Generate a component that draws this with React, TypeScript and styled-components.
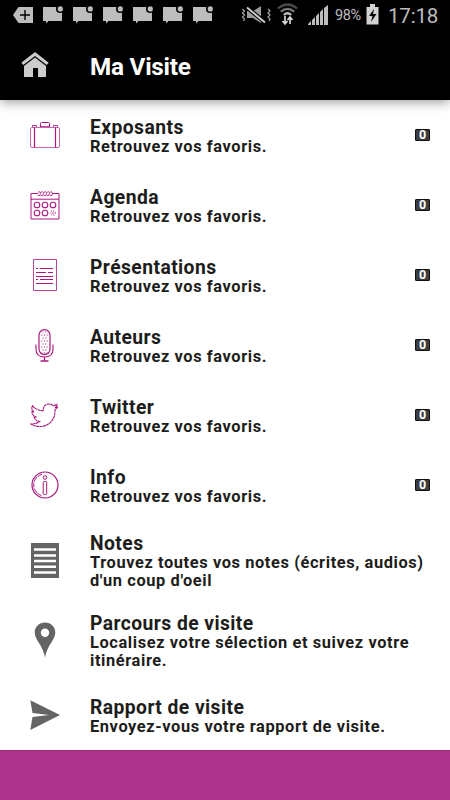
import React from 'react';
import styled, { createGlobalStyle } from 'styled-components';

const Global = createGlobalStyle`
  *, *::before, *::after { box-sizing: border-box; }
  html, body { margin: 0; padding: 0; background: #fff; }
  body { font-family: Roboto, "Open Sans", sans-serif; }
`;

const Screen = styled.div`
  width: 450px;
  height: 800px;
  display: flex;
  flex-direction: column;
  overflow: hidden;
  background: #fff;
`;

const Head = styled.header`
  flex: none;
  height: 100px;
  background: #000;
  box-shadow: 0 2px 11px rgba(0, 0, 0, 0.4);
`;

const StatusBar = styled.div`
  height: 32px;
  display: flex;
  justify-content: space-between;
  padding: 0 13px;
  color: #bdbdbd;
`;

const Notifications = styled.div`
  display: flex;
  gap: 10px;
  padding-top: 6px;
`;

const System = styled.div`
  display: flex;
  align-items: flex-start;
`;

const Battery = styled.span`
  display: block;
  width: 31px;
  font-size: 14.5px;
  line-height: 32px;
  letter-spacing: -0.4px;
`;

const Clock = styled.span`
  width: 49px;
  margin-left: 9px;
  font-size: 20.5px;
  line-height: 32px;
  letter-spacing: -0.2px;
  white-space: nowrap;
`;

const TitleBar = styled.div`
  height: 68px;
  display: grid;
  grid-template-columns: 90px 1fr;
  align-items: center;
`;

const HomeSlot = styled.div`
  padding: 0 0 3px 21px;
  display: flex;
`;

const PageTitle = styled.h1`
  margin: 0;
  padding-top: 1px;
  color: #fff;
  font-size: 24.3px;
  font-weight: 700;
  line-height: 30px;
  letter-spacing: -0.25px;
`;

const List = styled.ul`
  list-style: none;
  margin: 0;
  padding: 0;
  height: 650px;
`;

const Row = styled.li<{ $height: number }>`
  height: ${p => p.$height}px;
  display: grid;
  grid-template-columns: 90px 1fr auto;
  align-items: center;
`;

const IconSlot = styled.div`
  display: flex;
  justify-content: center;
  svg { display: block; }
`;

const Copy = styled.div<{ $drop: number }>`
  padding-top: ${p => p.$drop}px;
  color: #1d1d1b;
  white-space: nowrap;
`;

const RowTitle = styled.h2`
  margin: 0;
  font-size: 19.3px;
  line-height: 20px;
  font-weight: 700;
  letter-spacing: 0.43px;
`;

const Line = styled.div`
  font-size: 16.4px;
  line-height: 17.5px;
  font-weight: 700;
  letter-spacing: 0.6px;
`;

const Badge = styled.span`
  width: 15px;
  height: 12px;
  margin-right: 20px;
  border: 1px solid #111;
  border-radius: 1px;
  background: #3d3d3d;
  color: #fff;
  font-size: 12.5px;
  font-weight: 700;
  line-height: 10px;
  text-align: center;
`;

const Footer = styled.footer`
  height: 50px;
  border-top: 1px solid #9c2377;
  background: #ae338a;
`;

const pink = '#a8187f';
const grey = '#646464';

const TagIcon = () => (
  <svg width="20" height="18" viewBox="0 0 20 18">
    <path d="M5.500 1H20v16H5.500L0 9z" fill="#bdbdbd" />
    <path d="M7 9h10M12 4v10" stroke="#000" strokeWidth="1.400" />
  </svg>
);

const MessageIcon = () => (
  <svg width="20" height="18" viewBox="0 0 20 18">
    <path d="M0 1h19v14H5.500L3 17.500V15H0z" fill="#bdbdbd" />
    <circle cx="17" cy="3" r="4" fill="#000" />
    <circle cx="17.300" cy="2.900" r="2.600" fill="#bdbdbd" />
  </svg>
);

const MuteIcon = () => (
  <svg width="30" height="18" viewBox="0 0 30 18">
    <path d="M6 5h6l8-5v17l-8-5H6z" fill="#9b9b9b" />
    <path d="M5 1l20 16" stroke="#000" strokeWidth="4" />
    <path d="M6 1.500l18 15" stroke="#cacaca" strokeWidth="2" />
    <path d="M1.500 3l2 2-2 2 2 2-2 2 2 2-1 2M27 3l2 2-2 2 2 2-2 2 2 2-1 2" fill="none" stroke="#aaa" strokeWidth="1.200" />
  </svg>
);

const WifiIcon = () => (
  <svg width="21" height="23" viewBox="0 0 21 23">
    <g fill="none" strokeWidth="2.200">
      <path d="M.8 5.500Q10.500-2.500 20.200 5.500" stroke="#484848" />
      <path d="M3.800 8.700Q10.500 3 17.200 8.700" stroke="#777" />
      <path d="M6.800 12Q10.500 8.500 14.200 12" stroke="#bdbdbd" />
    </g>
    <path d="M8 13v7M5.500 18L8 21l2.500-3M13 21v-6M10.500 17l2.500-3 2.500 3" fill="none" stroke="#d5d5d5" strokeWidth="1.700" />
  </svg>
);

const SignalIcon = () => (
  <svg width="21" height="21" viewBox="0 0 21 21">
    <path d="M0 20v-1l3-3v4zM4 20v-5l3-3v8zM8 20v-9l3-3v12zM12 20V7l3-3v16zM16 20V3l4-3v20z" fill="#bdbdbd" />
  </svg>
);

const ChargeIcon = () => (
  <svg width="13" height="21" viewBox="0 0 13 21">
    <path d="M4 0h5v3h3.500v17.500H.5V3H4z" fill="#d2d2d2" />
    <path d="M8 5L3 12h3.500L5 18l5.500-8H7z" fill="#000" />
  </svg>
);

const StatusIcon = styled.span<{ $left: number; $top: number }>`
  display: block;
  margin-left: ${p => p.$left}px;
  padding-top: ${p => p.$top}px;
  svg { display: block; }
`;

const HomeIcon = () => (
  <svg width="28" height="26" viewBox="0 0 28 26" fill="#ccc">
    <path d="M14 0l13.700 10.700-2 2.300L14 4 2.300 13 .3 10.700z" />
    <path d="M14 5.500l11 8.500v11h-8v-9h-5v9H3V14z" />
  </svg>
);

const CaseIcon = () => (
  <svg width="30" height="26" viewBox="0 0 30 26" fill="none" stroke={pink}>
    <rect x=".5" y="5.500" width="29" height="20" rx="1.500" strokeOpacity=".65" />
    <path d="M4.500 5.500v20M25.500 5.500v20" strokeWidth="1.200" />
    <path d="M10.500 5V1.500q0-1 1-1h7q1 0 1 1V5" />
    <path d="M2.500 5V3.500h4V5M23.500 5V3.500h4V5M10.500 4.500h9" strokeOpacity=".8" />
  </svg>
);

const CalendarIcon = () => (
  <svg width="30" height="29" viewBox="0 0 30 29" fill="none" stroke={pink}>
    <path d="M8 2.500H1v25.500h28V2.500h-7M1 8.200h28" />
    {[9, 12, 15, 18, 21].map(x => (
      <path key={x} d={`M${x - 1} 1.300q2.500-1.500 2.500 1.200t-2.800 2.200`} strokeWidth=".9" />
    ))}
    {[7, 15, 23].map(x => (
      <circle key={x} cx={x} cy="14" r="2.800" strokeWidth="1.100" />
    ))}
    <circle cx="7" cy="22" r="2.800" strokeWidth="1.100" />
    <circle cx="15" cy="22" r="2.800" strokeWidth="1.100" />
    <circle cx="23" cy="22" r="2.300" strokeWidth="1.300" strokeDasharray="1 1" strokeOpacity=".6" />
    <circle cx="23" cy="22" r=".6" strokeOpacity=".5" />
  </svg>
);

const DocumentIcon = () => (
  <svg width="24" height="32" viewBox="0 0 24 32" fill="none" stroke={pink}>
    <path d="M.5.500h23v31H.5z" strokeOpacity=".8" />
    <path d="M3 9.500h2M6.500 9.500H20M3 13.500h10M15 13.500h5M3 17.500h17M3 20.500h2M7 20.500h13M3 24.500h17" strokeWidth="1.100" />
  </svg>
);

const holes = [3, 6, 9, 12, 15, 18, 21, 24];

const MicIcon = () => (
  <svg width="20" height="33" viewBox="0 0 20 33" fill="none" stroke={pink}>
    <rect x="4" y=".6" width="11" height="25" rx="5.500" strokeWidth="1.200" />
    {holes.map((y, i) => (
      <path key={y} d={i % 2 ? `M6.300 ${y}h1M9 ${y}h1M11.700 ${y}h1` : `M7.600 ${y}h1M10.400 ${y}h1`} strokeWidth="1" />
    ))}
    <path d="M1 15.500v4.500q0 8 8.500 8t8.500-8v-4.500" strokeWidth="1.100" />
    <path d="M9.500 28v4M5.500 32h8" strokeWidth="1.300" />
  </svg>
);

const BirdIcon = () => (
  <svg width="30" height="25" viewBox="0 0 30 25" fill="none" stroke={pink}>
    <path
      d="M2.500 2.800C5 6 8.500 7.500 13.200 7.700 13 3.200 15.500 1 19 1c2 0 3 .5 4.300 1.800L27 1.500l-1.500 3 2.500-.8-3 3.400C25.500 18 17.500 23.500 10 23.500c-3.500 0-6.500-.8-9-2.500 3.600 0 6.500-.8 8.700-2.500-2.800-.5-4.700-1.500-5.500-4.200h2.400C3.500 13.300 2 11.500 2 8.500l2 .6C1.700 7 1.300 5.200 2.500 2.800z"
      strokeWidth="1.100"
      strokeDasharray="3 .35"
    />
  </svg>
);

const InfoIcon = () => (
  <svg width="28" height="28" viewBox="0 0 28 28" fill="none" stroke={pink}>
    <circle cx="14" cy="14" r="13" strokeWidth="1.200" />
    <path d="M11 3.300A11 11 0 0 0 10.500 24.500" strokeDasharray="5 1" />
    <circle cx="14" cy="6.500" r="1.800" />
    <rect x="12.200" y="10.500" width="3.500" height="13" rx="1" />
  </svg>
);

const NotesIcon = () => (
  <svg width="28" height="35" viewBox="0 0 28 35">
    <path d="M0 0h28v35H0z" fill={grey} />
    <path d="M3 6.500h22M3 12.500h22M3 18h22M3 23.700h22M3 29.500h22" stroke="#fff" strokeWidth="2.600" />
  </svg>
);

const PinIcon = () => (
  <svg width="22" height="36" viewBox="0 0 22 36">
    <path
      d="M11 .5C5 .5.7 5 .7 10.500.7 18 9 23 11 35.500 13 23 21.300 18 21.300 10.500 21.300 5 17 .5 11 .5zM11 6.500a4.200 4.200 0 1 1 0 8.400 4.200 4.200 0 0 1 0-8.400z"
      fill={grey}
      fillRule="evenodd"
    />
  </svg>
);

const SendIcon = () => (
  <svg width="30" height="30" viewBox="0 0 30 30" fill={grey}>
    <path d="M.3.300L30 15 .3 30l2.200-13L19 15 2.500 13z" />
  </svg>
);

interface Entry {
  title: string;
  lines: string[];
  icon: React.ReactNode;
  height?: number;
  count?: number;
}

const favourites = ['Retrouvez vos favoris.'];

const entries: Entry[] = [
  { title: 'Exposants', lines: favourites, icon: <CaseIcon />, count: 0 },
  { title: 'Agenda', lines: favourites, icon: <CalendarIcon />, count: 0 },
  { title: 'Présentations', lines: favourites, icon: <DocumentIcon />, count: 0 },
  { title: 'Auteurs', lines: favourites, icon: <MicIcon />, count: 0 },
  { title: 'Twitter', lines: favourites, icon: <BirdIcon />, count: 0 },
  { title: 'Info', lines: favourites, icon: <InfoIcon />, count: 0 },
  {
    title: 'Notes',
    lines: ['Trouvez toutes vos notes (écrites, audios)', "d'un coup d'oeil"],
    icon: <NotesIcon />,
    height: 80,
  },
  {
    title: 'Parcours de visite',
    lines: ['Localisez votre sélection et suivez votre', 'itinéraire.'],
    icon: <PinIcon />,
    height: 80,
  },
  {
    title: 'Rapport de visite',
    lines: ['Envoyez-vous votre rapport de visite.'],
    icon: <SendIcon />,
  },
];

export default function App() {
  return (
    <Screen>
      <Global />
      <Head>
        <StatusBar>
          <Notifications>
            <TagIcon />
            {[0, 1, 2, 3, 4, 5].map(n => (
              <MessageIcon key={n} />
            ))}
          </Notifications>
          <System>
            <StatusIcon $left={0} $top={6}><MuteIcon /></StatusIcon>
            <StatusIcon $left={6} $top={3}><WifiIcon /></StatusIcon>
            <StatusIcon $left={10} $top={5}><SignalIcon /></StatusIcon>
            <StatusIcon $left={6} $top={0}><Battery>98%</Battery></StatusIcon>
            <StatusIcon $left={0} $top={4}><ChargeIcon /></StatusIcon>
            <Clock>17:18</Clock>
          </System>
        </StatusBar>
        <TitleBar>
          <HomeSlot><HomeIcon /></HomeSlot>
          <PageTitle>Ma Visite</PageTitle>
        </TitleBar>
      </Head>
      <List>
        {entries.map(e => (
          <Row key={e.title} $height={e.height ?? 70}>
            <IconSlot>{e.icon}</IconSlot>
            <Copy $drop={e.height ? 3 : 4}>
              <RowTitle>{e.title}</RowTitle>
              {e.lines.map(l => (
                <Line key={l}>{l}</Line>
              ))}
            </Copy>
            {e.count !== undefined && <Badge>{e.count}</Badge>}
          </Row>
        ))}
      </List>
      <Footer />
    </Screen>
  );
}
